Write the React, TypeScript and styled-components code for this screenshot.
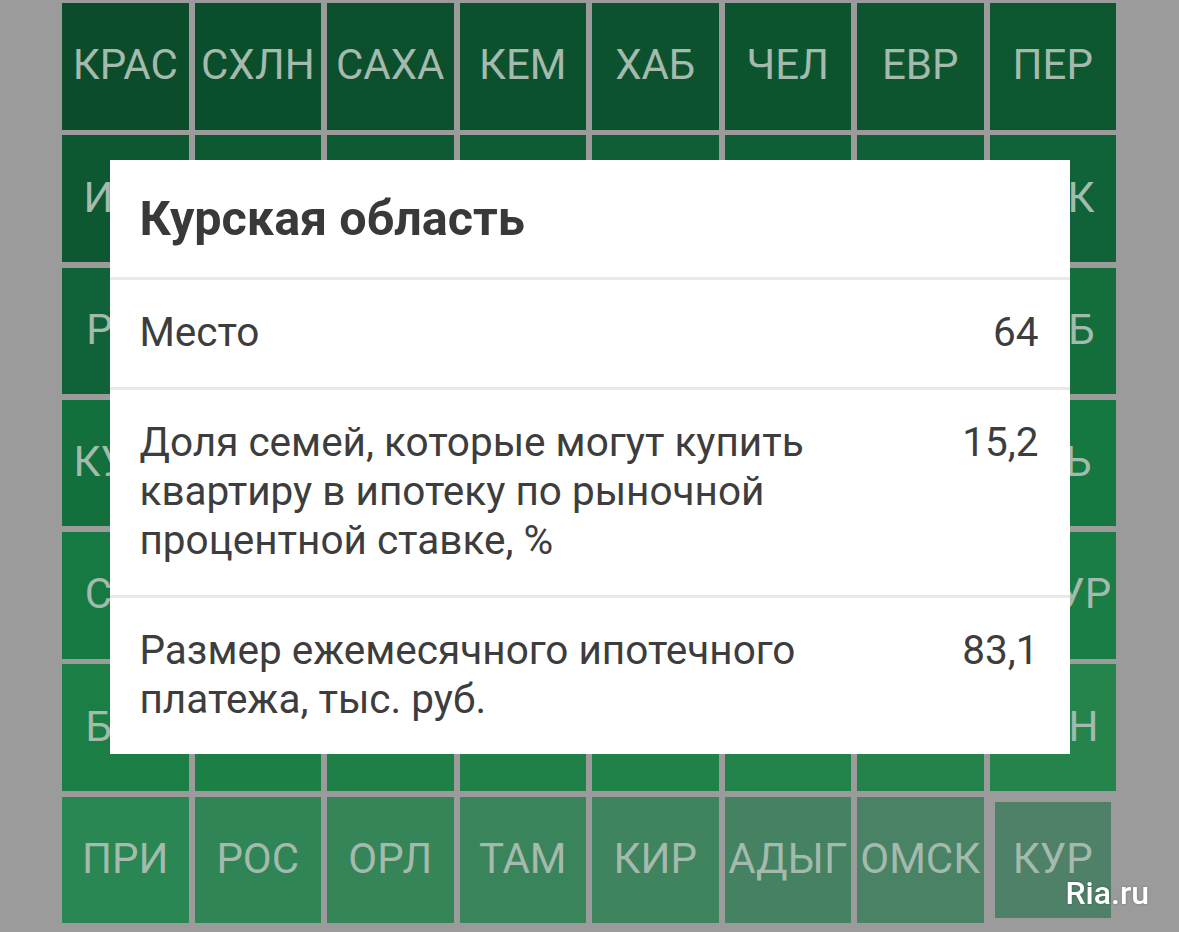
import styled, { createGlobalStyle } from "styled-components";

const GlobalStyle = createGlobalStyle`
  html, body {
    margin: 0;
    padding: 0;
    background: #9b9b9b;
    font-family: Roboto, "Noto Sans", "DejaVu Sans", sans-serif;
  }
  body {
    width: 1179px;
    height: 932px;
    overflow: hidden;
  }
`;

const Board = styled.div`
  display: grid;
  grid-template-columns: repeat(8, 1fr);
  grid-auto-rows: 126.5px;
  column-gap: 6px;
  row-gap: 5.8px;
  width: 1054px;
  margin: 3px 0 0 62px;
`;

const Tile = styled.div<{ $selected?: boolean }>`
  display: flex;
  align-items: center;
  justify-content: center;
  box-sizing: border-box;
  border: ${(p) => (p.$selected ? "5px solid #9b9b9b" : "none")};
  padding-bottom: 3px;
  font-size: 42px;
  color: #a3baac;
  white-space: nowrap;
  overflow: visible;
`;

const Overlay = styled.div`
  position: fixed;
  inset: 0;
  display: flex;
  justify-content: center;
  align-items: flex-start;
  padding-top: 160px;
`;

const Dialog = styled.div`
  width: 960px;
  background: #ffffff;
  color: #3d3d3d;
`;

const Title = styled.h2`
  margin: 0;
  padding: 30px 30px;
  font-size: 48.5px;
  line-height: 57px;
  font-weight: 700;
  color: #393939;
`;

const StatRow = styled.div`
  display: flex;
  justify-content: space-between;
  align-items: flex-start;
  gap: 48px;
  padding: 28px 31px 30px 30px;
  border-top: 3px solid #e9e9e9;
  font-size: 40.5px;
  line-height: 49px;
`;

const StatLabel = styled.div`
  flex: 1;
`;

const StatValue = styled.div`
  flex: none;
  text-align: right;
`;

const Watermark = styled.div`
  position: fixed;
  right: 30px;
  bottom: 20px;
  font-size: 32px;
  font-weight: 500;
  color: #ffffff;
  text-shadow: 0 0 3px rgba(0, 0, 0, 0.25);
`;

const regions = [
  ["КРАС", "СХЛН", "САХА", "КЕМ", "ХАБ", "ЧЕЛ", "ЕВР", "ПЕР"],
  ["ИНГ", "ЯНАО", "ХМАО", "МУР", "КАМ", "МАГ", "ЧУК", "ИРК"],
  ["РЯЗ", "ТЮМ", "ОРЕН", "СВЕР", "НОВ", "ВОЛГ", "ЛЕН", "СПБ"],
  ["КУРГ", "АЛТ", "КОМИ", "УДМ", "БАШ", "ТАТ", "СМЛ", "ТВЬ"],
  ["САР", "ПСК", "ЯРО", "КАЛ", "ТУЛ", "ВЛД", "МОС", "АМУР"],
  ["БРЯ", "ВОР", "ЛИП", "БЕЛ", "КРД", "СТАВ", "ПЕН", "ТМН"],
  ["ПРИ", "РОС", "ОРЛ", "ТАМ", "КИР", "АДЫГ", "ОМСК", "КУР"],
];

// heat scale: darker green for the top of the ranking, grey-green at the bottom
const stops: [number, [number, number, number]][] = [
  [0, [11, 76, 42]],
  [8, [13, 88, 49]],
  [16, [16, 99, 57]],
  [24, [19, 111, 60]],
  [32, [22, 121, 66]],
  [40, [27, 126, 69]],
  [47, [36, 132, 76]],
  [48, [42, 134, 82]],
  [55, [79, 129, 105]],
];

function heat(i: number) {
  for (let s = 0; s < stops.length - 1; s++) {
    const [a, ca] = stops[s];
    const [b, cb] = stops[s + 1];
    if (i >= a && i <= b) {
      const t = (i - a) / (b - a);
      const c = ca.map((v, k) => Math.round(v + (cb[k] - v) * t));
      return `rgb(${c[0]}, ${c[1]}, ${c[2]})`;
    }
  }
  return "rgb(79, 129, 105)";
}

const stats = [
  { label: "Место", value: "64" },
  {
    label: "Доля семей, которые могут купить квартиру в ипотеку по рыночной процентной ставке, %",
    value: "15,2",
  },
  { label: "Размер ежемесячного ипотечного платежа, тыс. руб.", value: "83,1" },
];

export default function App() {
  const tiles = regions.flat();
  return (
    <>
      <GlobalStyle />
      <Board>
        {tiles.map((name, i) => (
          <Tile
            key={name + i}
            $selected={name === "КУР"}
            style={{ background: heat(i) }}
          >
            {name}
          </Tile>
        ))}
      </Board>
      <Overlay>
        <Dialog>
          <Title>Курская область</Title>
          {stats.map((s) => (
            <StatRow key={s.label}>
              <StatLabel>{s.label}</StatLabel>
              <StatValue>{s.value}</StatValue>
            </StatRow>
          ))}
        </Dialog>
      </Overlay>
      <Watermark>Ria.ru</Watermark>
    </>
  );
}
